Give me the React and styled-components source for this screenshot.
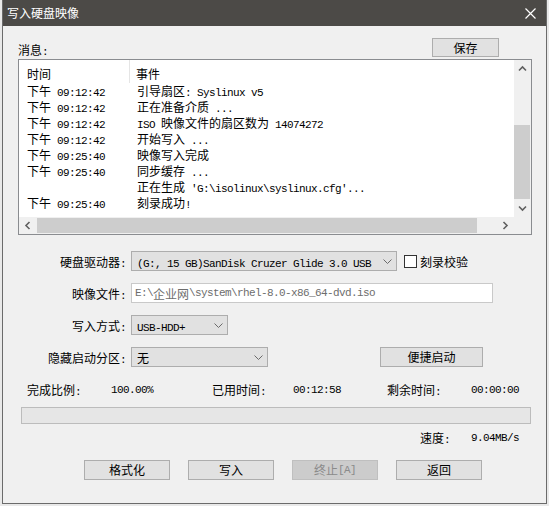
import React from 'react';
import styled, { createGlobalStyle } from 'styled-components';

const GlobalStyle = createGlobalStyle`
  html, body { margin: 0; padding: 0; background: #e9e9e9; }
  body {
    font-family: "Noto Sans CJK SC", "Liberation Sans", sans-serif;
    font-size: 12px;
    color: #000;
  }
  * { box-sizing: border-box; }
`;

const Page = styled.div`
  width: 549px;
  height: 506px;
  overflow: hidden;
  padding-left: 2px;
`;

const Window = styled.div`
  width: 545px;
  height: 504px;
  border: 1px solid #6b6b6b;
  border-top: none;
  background: #f0f0f0;
  display: flex;
  flex-direction: column;
`;

const TitleBar = styled.div`
  height: 26px;
  background: #4c4a47;
  display: flex;
  align-items: center;
  padding: 0 10px 0 4px;
  color: #fff;
  font-size: 12px;
  line-height: 26px;
  flex-shrink: 0;
`;

const TitleText = styled.div`
  flex: 1;
`;

const Body = styled.div`
  display: flex;
  flex-direction: column;
  padding: 12px 14px 0 15px;
`;

const M = styled.span`
  font-family: "Liberation Mono", monospace;
  font-size: 11px;
  letter-spacing: -0.6px;
`;

const TopRow = styled.div`
  display: flex;
  align-items: center;
  justify-content: space-between;
  height: 19px;
  padding-right: 33px;
`;

const Label = styled.div`
  padding-top: 4px;
`;

const Button = styled.div`
  width: ${(p) => p.$w || 86}px;
  height: ${(p) => p.$h || 20}px;
  background: ${(p) => (p.$disabled ? '#cccccc' : '#e1e1e1')};
  border: 1px solid ${(p) => (p.$disabled ? '#bfbfbf' : '#adadad')};
  color: ${(p) => (p.$disabled ? '#8a8a8a' : '#000')};
  display: flex;
  align-items: center;
  justify-content: center;
  line-height: 1;
  margin-left: ${(p) => p.$ml || 0}px;
  flex-shrink: 0;
`;

const ListBox = styled.div`
  margin-top: 2px;
  height: 176px;
  border: 1px solid #8a8c90;
  background: #fff;
  display: grid;
  grid-template-columns: 1fr 17px;
  grid-template-rows: 1fr 17px;
`;

const ListContent = styled.div`
  overflow: hidden;
  white-space: pre;
`;

const HeaderRow = styled.div`
  display: flex;
  height: 23px;
  align-items: stretch;
`;

const HeaderCell = styled.div`
  width: ${(p) => (p.$w ? `${p.$w}px` : 'auto')};
  padding-left: ${(p) => p.$pl}px;
  border-right: ${(p) => (p.$sep ? '1px solid #e5e5e5' : 'none')};
  display: flex;
  align-items: center;
  padding-top: 3px;
`;

const Row = styled.div`
  display: flex;
  height: 16px;
  line-height: 16px;
`;

const Cell = styled.div`
  width: ${(p) => (p.$w ? `${p.$w}px` : 'auto')};
  padding-left: ${(p) => p.$pl}px;
  flex-shrink: 0;
`;

const VScroll = styled.div`
  background: #f0f0f0;
  display: flex;
  flex-direction: column;
`;

const HScroll = styled.div`
  background: #f0f0f0;
  display: flex;
  align-items: stretch;
`;

const Corner = styled.div`
  background: #f0f0f0;
`;

const Arrow = styled.div`
  width: ${(p) => (p.$h ? '17px' : '100%')};
  height: ${(p) => (p.$h ? '100%' : '17px')};
  display: flex;
  align-items: center;
  justify-content: center;
  flex-shrink: 0;
`;

const VThumb = styled.div`
  margin: ${(p) => p.$top}px 1px 0 0;
  height: ${(p) => p.$size}px;
  background: #cdcdcd;
`;

const HThumb = styled.div`
  margin: 1px 0 1px 1px;
  width: ${(p) => p.$size}px;
  background: #cdcdcd;
`;

const Spacer = styled.div`
  flex: 1;
`;

const Form = styled.div`
  margin-top: 16px;
  display: flex;
  flex-direction: column;
  gap: 12px;
`;

const FormRow = styled.div`
  display: flex;
  align-items: center;
  height: 20px;
`;

const FieldLabel = styled.div`
  width: 108px;
  text-align: right;
  margin-right: 5px;
  white-space: pre;
  flex-shrink: 0;
`;

const Combo = styled.div`
  width: ${(p) => p.$w}px;
  height: 20px;
  background: #e1e1e1;
  border: 1px solid #adadad;
  display: flex;
  align-items: center;
  padding: 0 4px 0 5px;
  white-space: pre;
  flex-shrink: 0;
`;

const ComboText = styled.div`
  flex: 1;
  overflow: hidden;
`;

const TextInput = styled.div`
  width: 362px;
  height: 20px;
  background: #fff;
  border: 1px solid #c9c9c9;
  color: #6d6d6d;
  display: flex;
  align-items: center;
  padding-left: 3px;
  white-space: pre;
`;

const CheckWrap = styled.div`
  display: flex;
  align-items: center;
  margin-left: 7px;
  gap: 3px;
`;

const CheckBox = styled.div`
  width: 13px;
  height: 13px;
  border: 1px solid #333;
  background: #fff;
`;

const StatsRow = styled.div`
  margin-top: 15px;
  height: 16px;
  line-height: 16px;
  display: grid;
  grid-template-columns: 84px 101px 81px 94px 84px auto;
  padding-left: 9px;
  white-space: pre;
`;

const Progress = styled.div`
  margin: 9px 0 0 3px;
  width: 510px;
  height: 17px;
  background: #e6e6e6;
  border: 1px solid #bcbcbc;
`;

const SpeedRow = styled.div`
  margin-top: 6px;
  height: 16px;
  line-height: 16px;
  display: flex;
  justify-content: flex-end;
  gap: 21px;
  padding-right: 13px;
  white-space: pre;
`;

const ButtonRow = styled.div`
  margin-top: 14px;
  display: flex;
  gap: 18px;
  padding-left: 66px;
  white-space: pre;
`;

const Chevron = ({ dir = 'down', color = '#606060', sw = 1.6 }) => {
  const vertical = dir === 'up' || dir === 'down';
  const paths = {
    up: 'M1 5.5 L4.5 2 L8 5.5',
    down: 'M1 1.5 L4.5 5 L8 1.5',
    left: 'M5.5 1 L2 4.5 L5.5 8',
    right: 'M1.5 1 L5 4.5 L1.5 8',
  };
  return (
    <svg
      width={vertical ? 9 : 7}
      height={vertical ? 7 : 9}
      viewBox={vertical ? '0 0 9 7' : '0 0 7 9'}
    >
      <path d={paths[dir]} fill="none" stroke={color} strokeWidth={sw} />
    </svg>
  );
};

const ComboArrow = () => (
  <svg width="9" height="5" viewBox="0 0 9 5">
    <path d="M0.5 0.5 L4.5 4.5 L8.5 0.5" fill="none" stroke="#6a6a6a" strokeWidth="1" />
  </svg>
);

const CloseIcon = () => (
  <svg width="11" height="11" viewBox="0 0 11 11">
    <path d="M0.5 0.5 L10.5 10.5 M10.5 0.5 L0.5 10.5" stroke="#fff" strokeWidth="1.2" />
  </svg>
);

const logRows = [
  { time: '09:12:42', ev: <>引导扇区<M>: Syslinux v5</M></> },
  { time: '09:12:42', ev: <>正在准备介质<M> ...</M></> },
  { time: '09:12:42', ev: <><M>ISO </M>映像文件的扇区数为<M> 14074272</M></> },
  { time: '09:12:42', ev: <>开始写入<M> ...</M></> },
  { time: '09:25:40', ev: <>映像写入完成</> },
  { time: '09:25:40', ev: <>同步缓存<M> ...</M></> },
  { time: null, ev: <>正在生成<M> 'G:\isolinux\syslinux.cfg'...</M></> },
  { time: '09:25:40', ev: <>刻录成功<M>!</M></> },
];

export default function App() {
  return (
    <Page>
      <GlobalStyle />
      <Window>
        <TitleBar>
          <TitleText>写入硬盘映像</TitleText>
          <CloseIcon />
        </TitleBar>
        <Body>
          <TopRow>
            <Label>消息<M>:</M></Label>
            <Button $w={67} $h={19}>保存</Button>
          </TopRow>

          <ListBox>
            <ListContent>
              <HeaderRow>
                <HeaderCell $w={111} $pl={8} $sep>时间</HeaderCell>
                <HeaderCell $pl={6}>事件</HeaderCell>
              </HeaderRow>
              {logRows.map((r, i) => (
                <Row key={i}>
                  <Cell $w={111} $pl={8}>
                    {r.time ? <>下午<M> {r.time}</M></> : ''}
                  </Cell>
                  <Cell $pl={7}>{r.ev}</Cell>
                </Row>
              ))}
            </ListContent>
            <VScroll>
              <Arrow><Chevron dir="up" /></Arrow>
              <VThumb $top={48} $size={74} />
              <Spacer />
              <Arrow><Chevron dir="down" /></Arrow>
            </VScroll>
            <HScroll>
              <Arrow $h><Chevron dir="left" /></Arrow>
              <HThumb $size={440} />
              <Spacer />
              <Arrow $h><Chevron dir="right" /></Arrow>
            </HScroll>
            <Corner />
          </ListBox>

          <Form>
            <FormRow>
              <FieldLabel>硬盘驱动器<M>:</M></FieldLabel>
              <Combo $w={266}>
                <ComboText><M>(G:, 15 GB)SanDisk Cruzer Glide 3.0 USB</M></ComboText>
                <ComboArrow />
              </Combo>
              <CheckWrap>
                <CheckBox />
                <span>刻录校验</span>
              </CheckWrap>
            </FormRow>
            <FormRow>
              <FieldLabel>映像文件<M>:</M></FieldLabel>
              <TextInput>
                <M>E:\</M>企业网<M>\system\rhel-8.0-x86_64-dvd.iso</M>
              </TextInput>
            </FormRow>
            <FormRow>
              <FieldLabel>写入方式<M>:</M></FieldLabel>
              <Combo $w={97}>
                <ComboText><M>USB-HDD+</M></ComboText>
                <ComboArrow />
              </Combo>
            </FormRow>
            <FormRow>
              <FieldLabel>隐藏启动分区<M>:</M></FieldLabel>
              <Combo $w={137}>
                <ComboText>无</ComboText>
                <ComboArrow />
              </Combo>
              <Button $w={103} $ml={112}>便捷启动</Button>
            </FormRow>
          </Form>

          <StatsRow>
            <span>完成比例<M>:</M></span>
            <M>100.00%</M>
            <span>已用时间<M>:</M></span>
            <M>00:12:58</M>
            <span>剩余时间<M>:</M></span>
            <M>00:00:00</M>
          </StatsRow>

          <Progress />

          <SpeedRow>
            <span>速度<M>:</M></span>
            <M>9.04MB/s</M>
          </SpeedRow>

          <ButtonRow>
            <Button>格式化</Button>
            <Button>写入</Button>
            <Button $disabled>终止<M>[A]</M></Button>
            <Button>返回</Button>
          </ButtonRow>
        </Body>
      </Window>
    </Page>
  );
}
